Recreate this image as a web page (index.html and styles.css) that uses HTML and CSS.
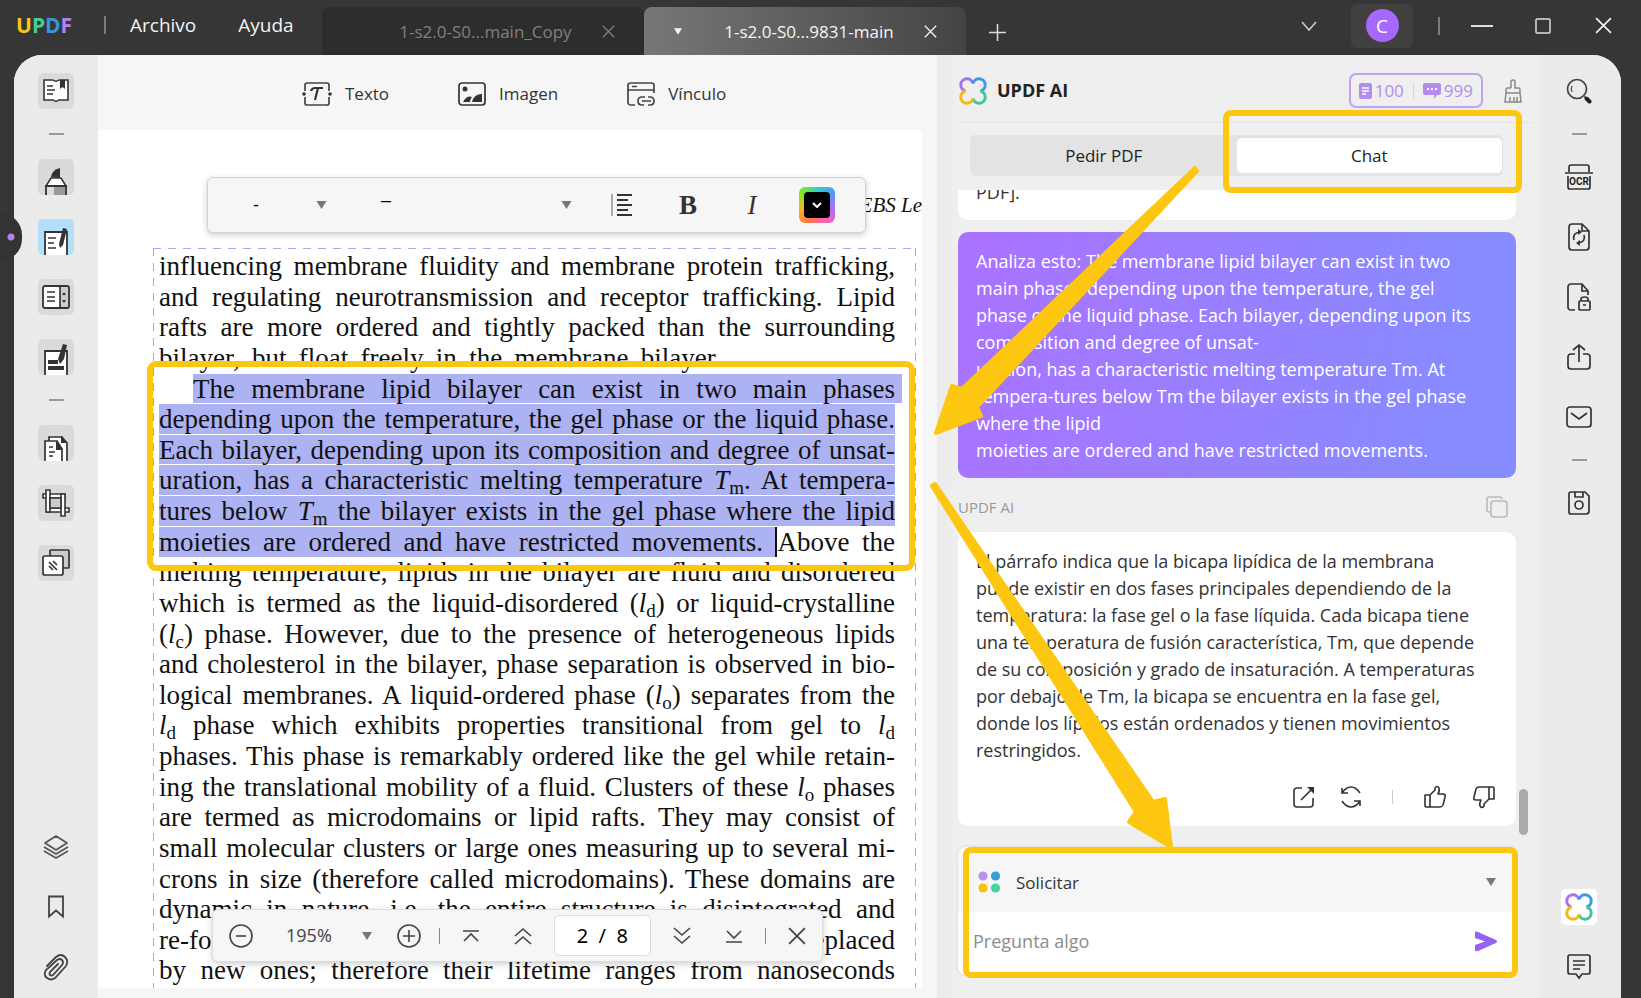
FILE: index.html
```html
<!DOCTYPE html>
<html lang="es">
<head>
<meta charset="utf-8">
<title>UPDF</title>
<link rel="stylesheet" href="styles.css">
</head>
<body>
<svg class="defs" aria-hidden="true">
  <symbol id="clover" viewBox="0 0 28 28">
    <g fill="none" stroke-width="3">
      <path stroke="#a573ec" d="M6.500 14A6.200 6.200 0 1 1 14 6.500"/>
      <path stroke="#3b9be8" d="M14 6.500A6.200 6.200 0 1 1 21.500 14"/>
      <path stroke="#3fc795" d="M21.500 14A6.200 6.200 0 1 1 14 21.500"/>
      <path stroke="#f4b813" d="M14 21.500A6.200 6.200 0 1 1 6.500 14"/>
    </g>
  </symbol>
  <symbol id="caret" viewBox="0 0 10 8"><path fill="currentColor" d="M0 0h10L5 8z"/></symbol>
  <symbol id="cross" viewBox="0 0 16 16"><path fill="none" stroke="currentColor" stroke-width="1.6" d="M1 1l14 14M15 1L1 15"/></symbol>
</svg>

<header class="titlebar">
  <div class="logo"><span class="l1">U</span><span class="l2">P</span><span class="l3">D</span><span class="l4">F</span></div>
  <i class="vline"></i>
  <nav class="menu"><button>Archivo</button><button>Ayuda</button></nav>
  <div class="tabs">
    <div class="tab"><span>1-s2.0-S0...main_Copy</span><button aria-label="Cerrar"><svg width="13" height="13"><use href="#cross"/></svg></button></div>
    <div class="tab active"><svg class="tab-caret" width="8" height="7"><use href="#caret"/></svg><span>1-s2.0-S0...9831-main</span><button aria-label="Cerrar"><svg width="13" height="13"><use href="#cross"/></svg></button></div>
    <button class="add" aria-label="Nueva pestaña"><svg width="17" height="17" viewBox="0 0 17 17"><path fill="none" stroke="#ddd" stroke-width="1.5" d="M8.5 0v17M0 8.5h17"/></svg></button>
  </div>
  <div class="window-tools">
    <button aria-label="Lista"><svg width="16" height="10" viewBox="0 0 16 10"><path fill="none" stroke="#ccc" stroke-width="1.6" d="M1 1l7 8 7-8"/></svg></button>
    <button class="account"><span>C</span></button>
    <i class="vline"></i>
    <button class="min" aria-label="Minimizar"><svg width="22" height="2"><path fill="#ddd" d="M0 0h22v2H0z"/></svg></button>
    <button class="max" aria-label="Maximizar"><svg width="16" height="16"><rect x="1" y="1" width="14" height="14" rx="1" fill="none" stroke="#ddd" stroke-width="1.5"/></svg></button>
    <button class="close" aria-label="Cerrar ventana"><svg width="17" height="17"><use href="#cross"/></svg></button>
  </div>
</header>

<main class="app">
  <aside class="rail left">
    <button class="tile" aria-label="Lector"><svg width="28" height="26" viewBox="0 0 28 26"><path fill="#fff" stroke="#333" stroke-width="1.6" d="M2 2h9q3 2.500 6 0h9v20h-9q-3 2.500-6 0H2z"/><path fill="#333" d="M18 2h5v9l-2.500-2L18 11z"/><path stroke="#333" stroke-width="1.6" d="M5 8h6M5 12h8M5 16h6"/></svg></button>
    <i class="dash"></i>
    <button class="tile low" aria-label="Comentar"><svg width="24" height="28" viewBox="0 0 24 28"><path fill="#333" d="M7 10q1-7 9-9v10z"/><path fill="#fff" stroke="#333" stroke-width="1.600" d="M7 11h10l5 8H2z"/><path fill="#999" d="M10 20h11v8H10z"/><path fill="#ddd" d="M3 20h7v8H3z"/><path fill="none" stroke="#333" stroke-width="1.8" d="M2 28v-9h20v9"/></svg></button>
    <button class="tile low on" aria-label="Editar"><svg width="26" height="28" viewBox="0 0 26 28"><path fill="#fff" stroke="#333" stroke-width="1.8" d="M2 29V5h22v24"/><path stroke="#333" stroke-width="1.6" d="M5 11h8M5 16h6M5 21h8"/><path fill="#333" d="M20 1l4 1-4 16-3 3-1-4z"/></svg></button>
    <button class="tile" aria-label="Páginas"><svg width="28" height="26" viewBox="0 0 28 26"><rect x="1" y="2" width="26" height="22" rx="2" fill="#fff" stroke="#333" stroke-width="1.8"/><path fill="#ccc" d="M18 3h8v20h-8z"/><path stroke="#333" stroke-width="1.7" d="M18 2v22M5 8h8M5 13h8M5 17h8"/><path fill="#333" d="M20 11l2-3 2 3zM20 16l2 3 2-3z"/></svg></button>
    <button class="tile low" aria-label="Censurar"><svg width="26" height="32" viewBox="0 0 26 32"><path fill="#fff" stroke="#333" stroke-width="1.8" d="M2 33V8h22v25"/><path fill="#333" d="M5 17h10v4H5zM5 23h16v4H5zM20 1l4 1-3 14-4 5-2-5z"/></svg></button>
    <i class="dash"></i>
    <button class="tile low" aria-label="Organizar"><svg width="26" height="26" viewBox="0 0 26 26"><path fill="#fff" stroke="#333" stroke-width="1.7" d="M6 28V2h13l5 6v20"/><path fill="#fff" stroke="#333" stroke-width="1.7" d="M2 28V6h12l5 8v14"/><path fill="#333" d="M13 6l7 9h-7zM18 1l6 7h-6z"/><path stroke="#333" stroke-width="1.600" d="M6 12h4M6 17h6M6 21h4"/></svg></button>
    <button class="tile" aria-label="Recortar"><svg width="28" height="28" viewBox="0 0 28 28"><g fill="#fff" stroke="#333" stroke-width="1.600"><path d="M1 5h22v4H1zM5 19h22v4H5z"/><path d="M4 1h4v22H4zM19 5h4v22h-4z"/><path fill="#ccc" d="M8 9h11v10H8z"/></g></svg></button>
    <button class="tile" aria-label="Lote"><svg width="28" height="28" viewBox="0 0 28 28"><g stroke="#333" stroke-width="1.700"><rect x="8" y="1" width="19" height="18" rx="1" fill="#ccc"/><rect x="1" y="7" width="20" height="19" rx="2" fill="#fff"/><path d="M7 13l8 8M11 12l4 4M7 17l4 4"/></g></svg></button>
    <button class="tile plain end" aria-label="Capas"><svg width="26" height="26" viewBox="0 0 26 26"><g fill="none" stroke="#555" stroke-width="1.700" stroke-linejoin="round"><path d="M13 2l11 7-11 7L2 9zM1 13l12 7 12-7M1 17l12 7 12-7"/></g></svg></button>
    <button class="tile plain" aria-label="Marcadores"><svg width="18" height="24" viewBox="0 0 18 24"><path fill="none" stroke="#444" stroke-width="1.8" d="M2 1.500h14v20l-7-6-7 6z"/></svg></button>
    <button class="tile plain" aria-label="Adjuntos"><svg width="26" height="28" viewBox="0 0 26 28"><path fill="none" stroke="#444" stroke-width="1.800" stroke-linecap="round" d="M4 13L13 4q5-4 9 0t1 9L12 25q-4 3-8 0t-1-8L14 7q3-2 5 0t0 5l-9 10q-2 1-3 0t0-3l8-8"/></svg></button>
  </aside>

  <section class="doc">
    <div class="doc-tools">
      <button><svg width="30" height="26" viewBox="0 0 30 26"><g fill="none" stroke="#444" stroke-width="1.700"><path d="M3 10V4q0-2 2-2h20q2 0 2 2v6M27 16v6q0 2-2 2H5q-2 0-2-2v-6"/></g><circle cx="2" cy="13" r="1.800" fill="#333"/><circle cx="28" cy="13" r="1.800" fill="#333"/><path fill="none" stroke="#333" stroke-width="2.200" d="M9 10q1-3 4-3h8M16 7l-3 12"/></svg>Texto</button>
      <button><svg width="28" height="26" viewBox="0 0 28 26"><rect x="1" y="2" width="26" height="22" rx="3" fill="none" stroke="#333" stroke-width="1.700"/><circle cx="7" cy="8" r="2.500" fill="#333"/><path fill="#333" d="M5 21q4-7 9-5-2 2-2 5zM14 21q2-8 10-8v8z"/></svg>Imagen</button>
      <button><svg width="28" height="26" viewBox="0 0 28 26"><g fill="none" stroke="#444" stroke-width="1.700"><path d="M8 24H4q-3 0-3-3V4q0-2 3-2h20q3 0 3 2v8M1 9h26M5 5.500h5M17 24h-2q-4 0-4-4t4-4h3M21 16h2q4 0 4 4t-4 4h-2M15 20h9"/></g></svg>Vínculo</button>
    </div>
    <article class="page">
      <p class="running">FEBS Le</p>
      <div class="format-bar">
        <span class="blank size">-</span>
        <svg class="c1" width="11" height="8"><use href="#caret"/></svg>
        <span class="blank family">–</span>
        <svg class="c2" width="11" height="8"><use href="#caret"/></svg>
        <button aria-label="Alinear"><svg width="24" height="24" viewBox="0 0 24 24"><path stroke="#aaa" stroke-width="2" d="M2 1v22"/><path stroke="#333" stroke-width="1.800" d="M7 2h15M7 7h11M7 12h15M7 17h11M7 22h15"/></svg></button>
        <button class="bold">B</button>
        <button class="ital">I</button>
        <button class="colour" aria-label="Color"><span><svg width="10" height="6" viewBox="0 0 10 6"><path fill="none" stroke="#fff" stroke-width="2" d="M1 1l4 4 4-4"/></svg></span></button>
      </div>
      <div class="block">
        <p>influencing membrane fluidity and membrane protein trafficking,</p>
        <p>and regulating neurotransmission and receptor trafficking. Lipid</p>
        <p>rafts are more ordered and tightly packed than the surrounding</p>
        <p class="short">bilayer, but float freely in the membrane bilayer.</p>
        <p class="sel first">The membrane lipid bilayer can exist in two main phases</p>
        <p class="sel">depending upon the temperature, the gel phase or the liquid phase.</p>
        <p class="sel">Each bilayer, depending upon its composition and degree of unsat-</p>
        <p class="sel">uration, has a characteristic melting temperature <em>T</em><sub>m</sub>. At tempera-</p>
        <p class="sel">tures below <em>T</em><sub>m</sub> the bilayer exists in the gel phase where the lipid</p>
        <p><mark>moieties are ordered and have restricted movements. </mark>Above the</p>
        <p>melting temperature, lipids in the bilayer are fluid and disordered</p>
        <p>which is termed as the liquid-disordered (<em>l</em><sub>d</sub>) or liquid-crystalline</p>
        <p>(<em>l</em><sub>c</sub>) phase. However, due to the presence of heterogeneous lipids</p>
        <p>and cholesterol in the bilayer, phase separation is observed in bio-</p>
        <p>logical membranes. A liquid-ordered phase (<em>l</em><sub>o</sub>) separates from the</p>
        <p><em>l</em><sub>d</sub> phase which exhibits properties transitional from gel to <em>l</em><sub>d</sub></p>
        <p>phases. This phase is remarkably ordered like the gel while retain-</p>
        <p>ing the translational mobility of a fluid. Clusters of these <em>l</em><sub>o</sub> phases</p>
        <p>are termed as microdomains or lipid rafts. They may consist of</p>
        <p>small molecular clusters or large ones measuring up to several mi-</p>
        <p>crons in size (therefore called microdomains). These domains are</p>
        <p>dynamic in nature, i.e. the entire structure is disintegrated and</p>
        <p>re-formed with time and the old ones are continuously replaced</p>
        <p>by new ones; therefore their lifetime ranges from nanoseconds</p>
      </div>
    </article>
    <div class="zoom-bar">
      <button aria-label="Reducir"><svg width="24" height="24" viewBox="0 0 24 24"><g fill="none" stroke="#444" stroke-width="1.600"><circle cx="12" cy="12" r="11"/><path d="M7 12h10"/></g></svg></button>
      <span class="pct">195%</span>
      <svg class="zc" width="10" height="8"><use href="#caret"/></svg>
      <button class="plus" aria-label="Ampliar"><svg width="24" height="24" viewBox="0 0 24 24"><g fill="none" stroke="#444" stroke-width="1.600"><circle cx="12" cy="12" r="11"/><path d="M6 12h12M12 6v12"/></g></svg></button>
      <i class="vline"></i>
      <button aria-label="Primera"><svg width="18" height="16" viewBox="0 0 18 16"><path fill="none" stroke="#444" stroke-width="1.600" d="M1 3h16M2 13l7-7 7 7"/></svg></button>
      <button class="w" aria-label="Anterior"><svg width="18" height="18" viewBox="0 0 18 18"><path fill="none" stroke="#444" stroke-width="1.600" d="M1 9l8-7 8 7M1 17l8-7 8 7"/></svg></button>
      <input aria-label="Página" value="2&nbsp; /&nbsp; 8">
      <button aria-label="Siguiente"><svg width="18" height="18" viewBox="0 0 18 18"><path fill="none" stroke="#444" stroke-width="1.600" d="M1 1l8 7 8-7M1 9l8 7 8-7"/></svg></button>
      <button class="w" aria-label="Última"><svg width="18" height="16" viewBox="0 0 18 16"><path fill="none" stroke="#444" stroke-width="1.600" d="M2 3l7 7 7-7M1 14h16"/></svg></button>
      <i class="vline"></i>
      <button aria-label="Cerrar barra"><svg width="18" height="18"><use href="#cross"/></svg></button>
    </div>
  </section>

  <section class="ai">
    <header class="ai-head">
      <svg width="28" height="28"><use href="#clover"/></svg>
      <h2>UPDF AI</h2>
      <div class="quota">
        <svg width="13" height="16" viewBox="0 0 13 16"><rect width="13" height="16" rx="2" fill="#b48cf0"/><path stroke="#fff" stroke-width="1.400" d="M3 5h7M3 8h7M3 11h4"/></svg><span>100</span>
        <i></i>
        <svg width="18" height="16" viewBox="0 0 18 16"><path fill="#b48cf0" d="M2 0h14q2 0 2 2v8q0 2-2 2h-2l-3 4v-4H2q-2 0-2-2V2q0-2 2-2z"/><path stroke="#fff" stroke-width="2" stroke-dasharray="2 2" d="M4 6h10"/></svg><span>999</span>
      </div>
      <button aria-label="Limpiar"><svg width="18" height="24" viewBox="0 0 18 24"><path fill="none" stroke="#888" stroke-width="1.500" d="M7 9V3q0-2 2-2t2 2v6h4q1 0 1 2v3H2v-3q0-2 1-2h4M2 14L1 23h16l-1-9M6 23v-5M10 23v-5M13 23v-5"/></svg></button>
    </header>
    <div class="modes"><button>Pedir PDF</button><button class="on">Chat</button></div>
    <div class="thread">
      <div class="msg cut"><span>PDF].</span></div>
      <div class="msg mine">Analiza esto: The membrane lipid bilayer can exist in two<br>main phases depending upon the temperature, the gel<br>phase or the liquid phase. Each bilayer, depending upon its<br>composition and degree of unsat-<br>uration, has a characteristic melting temperature Tm. At<br>tempera-tures below Tm the bilayer exists in the gel phase<br>where the lipid<br>moieties are ordered and have restricted movements.</div>
      <div class="who"><span>UPDF AI</span><button aria-label="Copiar"><svg width="22" height="22" viewBox="0 0 22 22"><g fill="none" stroke="#bbb" stroke-width="1.600"><path d="M4 16H3q-2 0-2-2V3q0-2 2-2h11q2 0 2 2"/><rect x="5" y="5" width="16" height="16" rx="3"/></g></svg></button></div>
      <div class="msg answer">El párrafo indica que la bicapa lipídica de la membrana<br>puede existir en dos fases principales dependiendo de la<br>temperatura: la fase gel o la fase líquida. Cada bicapa tiene<br>una temperatura de fusión característica, Tm, que depende<br>de su composición y grado de insaturación. A temperaturas<br>por debajo de Tm, la bicapa se encuentra en la fase gel,<br>donde los lípidos están ordenados y tienen movimientos<br>restringidos.
        <div class="acts">
          <button aria-label="Abrir"><svg width="22" height="22" viewBox="0 0 22 22"><path fill="none" stroke="#333" stroke-width="1.600" d="M9 2H4Q1 2 1 5v13q0 3 3 3h13q3 0 3-3v-6M8 14L19 3"/><path fill="#333" d="M14 1h7v7z"/></svg></button>
          <button aria-label="Repetir"><svg width="22" height="22" viewBox="0 0 22 22"><path fill="none" stroke="#333" stroke-width="1.600" d="M2 2v5h6M2 7q4-6 9-6t9 6M20 20v-5h-6M20 15q-4 6-9 6t-9-6"/></svg></button>
          <i></i>
          <button aria-label="Me gusta"><svg width="24" height="24" viewBox="0 0 24 24"><path id="thumb" fill="none" stroke="#333" stroke-width="1.600" stroke-linejoin="round" d="M2 10h5v12H3q-1 0-1-1zM7 10l5-5V3q2-3 4 0 1 2-1 6h5q3 0 2 3l-2 8q-1 2-3 2H7"/></svg></button>
          <button aria-label="No me gusta"><svg class="flip" width="24" height="24" viewBox="0 0 24 24"><use href="#thumb"/></svg></button>
        </div>
      </div>
      <i class="scroll"></i>
    </div>
    <form class="ask">
      <button type="button" class="pick"><svg width="23" height="22" viewBox="0 0 23 22"><circle cx="5" cy="5" r="4.600" fill="#ba92ec"/><circle cx="17.500" cy="5" r="4.600" fill="#379fd9"/><circle cx="5" cy="17" r="4.600" fill="#f6c20a"/><circle cx="17.500" cy="17" r="4.600" fill="#43d59a"/></svg><span>Solicitar</span><svg width="10" height="8"><use href="#caret"/></svg></button>
      <div class="entry"><input aria-label="Pregunta" placeholder="Pregunta algo"><button type="button" aria-label="Enviar"><svg width="24" height="21" viewBox="0 0 24 21"><path fill="#9861f5" d="M1 1q1-1 3 0l18 8q2 1.500 0 3L4 20q-3 1-3-1v-5l10-3.500L1 7z"/></svg></button></div>
    </form>
  </section>

  <aside class="rail right">
    <button class="tile plain" aria-label="Buscar"><svg width="26" height="26" viewBox="0 0 26 26"><circle cx="11" cy="11" r="9.500" fill="none" stroke="#444" stroke-width="1.700"/><path fill="none" stroke="#555" stroke-width="1.400" d="M6 8q-1.500 3 0 6M18 18l3 3"/><path stroke="#222" stroke-width="4" stroke-linecap="round" d="M20.500 20.500l3 3"/></svg></button>
    <i class="dash"></i>
    <button class="tile plain" aria-label="OCR"><svg width="28" height="28" viewBox="0 0 28 28"><path fill="none" stroke="#333" stroke-width="1.700" d="M4 9V4q0-2 2-2h16q2 0 2 2v5M0 10h28M3 13v11q0 2 2 2h18q2 0 2-2V13"/><text x="14" y="22" text-anchor="middle" class="ocr">OCR</text></svg></button>
    <button class="tile plain" aria-label="Convertir"><svg width="24" height="28" viewBox="0 0 24 28"><path fill="none" stroke="#333" stroke-width="1.700" d="M15 1H5Q2 1 2 4v20q0 3 3 3h14q3 0 3-3V8zM15 1v7h7M7 17q-2-7 6-8M17 12q2 7-6 8"/><path fill="#333" d="M11 6l4 3-4 3zM13 17l-4 3 4 3z"/></svg></button>
    <button class="tile plain" aria-label="Proteger"><svg width="24" height="28" viewBox="0 0 24 28"><path fill="none" stroke="#333" stroke-width="1.700" d="M8 27H4q-3 0-3-3V4q0-3 3-3h11l6 7v4M15 1v7h6"/><rect x="12" y="18" width="11" height="9" rx="1" fill="none" stroke="#333" stroke-width="1.700"/><path fill="none" stroke="#333" stroke-width="1.600" d="M14 18v-2q0-2 3.500-2t3.500 2v2M16 22h3"/></svg></button>
    <button class="tile plain" aria-label="Compartir"><svg width="24" height="28" viewBox="0 0 24 28"><path fill="none" stroke="#333" stroke-width="1.700" d="M8 11H4q-3 0-3 3v9q0 3 3 3h16q3 0 3-3v-9q0-3-3-3h-4M12 19V2M6 7l6-5 6 5"/></svg></button>
    <button class="tile plain" aria-label="Correo"><svg width="26" height="24" viewBox="0 0 26 24"><rect x="1" y="2" width="24" height="20" rx="3" fill="none" stroke="#333" stroke-width="1.700"/><path fill="none" stroke="#333" stroke-width="1.700" d="M5 8l8 6 8-6"/></svg></button>
    <i class="dash"></i>
    <button class="tile plain" aria-label="Guardar"><svg width="24" height="24" viewBox="0 0 24 24"><path fill="none" stroke="#333" stroke-width="1.700" d="M4 1h14l4 4v15q0 3-3 3H4q-2 0-2-2V3q0-2 2-2zM8 1v5h8V1"/><circle cx="12" cy="14" r="4" fill="none" stroke="#333" stroke-width="1.700"/></svg></button>
    <button class="tile white end" aria-label="UPDF AI"><svg width="28" height="28"><use href="#clover"/></svg></button>
    <button class="tile plain" aria-label="Comentarios"><svg width="24" height="26" viewBox="0 0 24 26"><path fill="none" stroke="#333" stroke-width="1.700" d="M3 1h18q2 0 2 2v15q0 2-2 2h-6l-3 4-3-4H3q-2 0-2-2V3q0-2 2-2zM6 7h12M6 11h12M6 15h7"/></svg></button>
  </aside>
</main>

<i class="handle"></i>
<svg class="callouts" viewBox="0 0 1641 998" aria-hidden="true">
  <g fill="none" stroke="#fdc610" stroke-width="6">
    <rect x="150" y="364" width="762" height="204" rx="6"/>
    <rect x="1226" y="113" width="293" height="77" rx="5"/>
    <rect x="966" y="850" width="549" height="125" rx="5"/>
  </g>
  <g fill="#fdc610" stroke="#fdc610" stroke-width="4" stroke-linejoin="round">
    <path d="M1195 168L962 389 952 386 936 433 981 416 977 407 1197 171z"/>
    <path d="M932 486L1136 812 1129 822 1171 847 1165 799 1153 802 935 484z"/>
  </g>
</svg>
</body>
</html>
```
FILE: styles.css
```css
* { box-sizing: border-box; }
html, body { height: 100%; margin: 0; }
body {
  display: flex; flex-direction: column; position: relative; overflow: hidden;
  background: #363636; color: #333;
  font: 17px/27px "Open Sans", "Noto Sans", sans-serif;
}
button, input { font: inherit; color: inherit; border: 0; padding: 0; margin: 0; background: none; }
p, h2 { margin: 0; }
svg { display: block; flex: none; }
.defs { position: absolute; width: 0; height: 0; }

/* Title bar */
.titlebar { display: flex; flex: none; height: 55px; align-items: stretch; color: #f2f2f2; }
.vline { flex: none; width: 2px; height: 18px; background: #7c7c7c; align-self: center; }
.titlebar .vline { margin-bottom: 5px; }
.logo { width: 87px; padding-left: 16px; line-height: 50px; font-weight: 700; font-size: 21px; }
.l1 { color: #f6c61c; } .l2 { color: #43cf94; } .l3 { color: #3a94d6; } .l4 { color: #b183ee; }
.menu { display: flex; gap: 42px; padding: 0 28px 4px 24px; font-size: 19px; }
.logo + .vline { margin-left: 17px; }
.tabs { display: flex; align-items: flex-end; }
.tab { display: flex; align-items: center; justify-content: flex-end; gap: 30px; width: 322px; height: 48px; padding-right: 29px; border-radius: 8px 8px 0 0; background: #2d2d2d; color: #808080; }
.tab.active { background: linear-gradient(90deg, #777, #444); color: #f5f5f5; }
.tab-caret { margin-right: 12px; }
.add { height: 46px; margin-left: 23px; }
.window-tools { display: flex; align-items: center; margin-left: auto; padding: 0 29px 4px 0; }
.window-tools .vline { margin: 0 31px 0 25px; }
.window-tools .account { width: 62px; height: 44px; margin-left: 34px; border-radius: 6px; background: #404040; display: flex; align-items: center; justify-content: center; }
.account span { width: 33px; height: 33px; border-radius: 50%; background: #a768ff; color: #fff; font-size: 19px; line-height: 34px; }
.max { margin-left: 42px; }
.close { margin-left: 44px; }

/* Frame */
.app { display: flex; flex: 1; min-height: 0; margin: 0 20px 0 14px; border-radius: 28px 28px 0 0; overflow: hidden; background: #efefef; }
.rail { display: flex; flex: none; flex-direction: column; align-items: center; gap: 24px; padding: 18px 0 13px; background: #ebebeb; }
.left { width: 84px; }
.right { width: 81px; padding-right: 3px; }
.tile { display: flex; flex: none; align-items: center; justify-content: center; width: 36px; height: 36px; border-radius: 5px; background: #dadada; overflow: hidden; }
.tile.low { align-items: flex-end; }
.tile.on { background: #b4dffa; }
.tile.plain { background: none; }
.tile.white { background: #fff; }
.end { margin-top: auto; }
.dash { flex: none; width: 15px; height: 2px; margin: 0; background: #999; }
.ocr { font: 700 10px Roboto, sans-serif; fill: #222; }
.handle { position: absolute; left: 0; top: 213px; width: 22px; height: 48px; border-radius: 0 24px 24px 0; background: #333 radial-gradient(circle at 11px 24px, #b183ee 3px, transparent 4px); }

/* Document */
.doc { position: relative; display: flex; flex: 1; flex-direction: column; min-width: 0; padding: 0 15px 10px 0; background: #f6f6f6; }
.doc-tools { display: flex; flex: none; height: 75px; align-items: center; gap: 69px; padding: 2px 0 0 204px; }
.doc-tools button { display: flex; align-items: center; gap: 13px; }
.page { position: relative; display: flex; flex: 1; flex-direction: column; min-height: 0; padding: 59px 6px 0 55px; border-radius: 4px; background: #fff; overflow: hidden; color: #111; font-family: "Liberation Serif", serif; }
.running { margin: 0 -6px 0 0; flex: none; height: 59px; font-size: 21px; line-height: 32px; font-style: italic; text-align: right; }
.block {
  display: grid; flex: 1; min-height: 0; grid-template-rows: repeat(24, minmax(0, 1fr)); padding: 3px 21px 2px 6px; font-size: 27px; line-height: 30px;
  background:
    repeating-linear-gradient(90deg, #bba0e2 0 8px, transparent 8px 15px) top / 100% 1px no-repeat,
    repeating-linear-gradient(180deg, #b3a0e6 0 8px, transparent 8px 15px) left / 1px 100% no-repeat,
    repeating-linear-gradient(180deg, #b3a0e6 0 8px, transparent 8px 15px) right / 1px 100% no-repeat;
}
.block p { white-space: nowrap; text-align-last: justify; }
.block .short { width: 562px; }
.block .sel { background: #adb2f3; background-clip: padding-box; border-bottom: 1px solid #fff; }
.block .first { margin: 0 -7px 0 34px; padding-right: 7px; }
.block sub { font-size: 19px; line-height: 0; vertical-align: -5px; }
mark { background: #adb2f3; color: inherit; border-right: 2px solid #111; }

.format-bar { position: absolute; left: 109px; top: 47px; display: flex; align-items: center; width: 659px; height: 56px; padding: 0 30px 0 45px; border: 1px solid #d2d2d2; border-radius: 6px; background: #f6f6f6; box-shadow: 0 2px 6px #0003; color: #333; }
.blank { font: 18px "Liberation Sans", sans-serif; color: #000; }
.format-bar svg[width="11"], .zc { color: #777; }
.c1 { margin-left: 57px; }
.family { margin: -10px 0 0 54px; }
.c2 { margin: 0 38px 0 auto; }
.bold, .ital { width: 64px; font: 700 27px "Liberation Serif", serif; }
.bold { margin-left: 33px; width: 42px; }
.ital { font-weight: 400; font-style: italic; margin-left: 11px; margin-right: 15px; }
.colour { width: 36px; height: 36px; padding: 5px; border-radius: 6px; background: conic-gradient(#32d0d0, #4c9df5, #b46cf0, #ff5fb4, #ff7a4a, #ffb020, #7fea20, #32d0d0); }
.colour span { display: flex; align-items: center; justify-content: center; height: 26px; border-radius: 4px; background: #000; }

.zoom-bar { position: absolute; left: 114px; bottom: 36px; display: flex; align-items: center; gap: 22px; width: 611px; height: 53px; padding: 0 0 0 16px; border-radius: 6px; border: 1px solid #ddd; background: #f6f6f6; box-shadow: 0 2px 6px #0003; color: #444; font-size: 18px; }
.zoom-bar .vline { width: 1px; height: 16px; background: #888; }
.zoom-bar .plus { margin-left: 3px; }
.zoom-bar .plus + .vline { margin-left: -4px; }
.pct { margin-left: 11px; }
.zc { margin-left: 8px; }
.zoom-bar .w { margin-left: 12px; }
.zoom-bar input { width: 97px; height: 41px; border: 1px solid #ddd; border-radius: 5px; background: #fff; color: #000; font: 20px "Noto Sans", sans-serif; text-align: center; }

/* Assistant */
.ai { display: flex; flex: none; flex-direction: column; width: 603px; padding: 0 24px 23px 21px; background: linear-gradient(90deg, #eaeaea, #efefef 20px); }
.ai-head { display: flex; flex: none; align-items: center; height: 68px; margin-right: -17px; padding: 4px 0 0 1px; border-bottom: 1px solid #e4e4e4; }
.ai-head h2 { margin: 0 auto 0 10px; font-size: 18px; line-height: 27px; color: #222; }
.quota { display: flex; align-items: center; gap: 3px; height: 35px; padding: 0 8px; border: 2px solid #c3a2f2; border-radius: 7px; color: #b48cf0; }
.quota i { width: 1px; height: 16px; margin: 0 6px; background: #d5d5d5; }
.ai-head button { margin: 0 11px 0 21px; }
.modes { display: flex; flex: none; height: 41px; margin: 12px 13px 0 12px; padding: 3px 1px; border-radius: 5px; background: #e3e3e3; color: #222; }
.modes button { flex: 1; border-radius: 5px; }
.modes .on { background: #fff; }
.thread { position: relative; display: flex; flex: 1; flex-direction: column; min-height: 0; margin-top: 14px; }
.msg { flex: none; padding: 16px 18px 14px; border-radius: 10px; background: #fff; font-size: 18px; white-space: nowrap; }
.msg.cut { display: flex; align-items: flex-end; height: 30px; padding: 0 18px 14px; margin-bottom: 12px; border-radius: 0 0 10px 10px; overflow: hidden; }
.mine { background: linear-gradient(100deg, #ab72ff, #868cff 92%); color: #fff; }
.who { display: flex; justify-content: space-between; align-items: center; height: 54px; padding: 4px 8px 0 0; font-size: 15px; color: #999; }
.acts { display: flex; align-items: center; justify-content: flex-end; gap: 25px; height: 48px; padding: 18px 2px 0 0; }
.acts i { width: 1px; height: 14px; margin: 0 5px; background: #ccc; }
.flip { transform: rotate(180deg); }
.scroll { position: absolute; right: -12px; bottom: 12px; width: 9px; height: 46px; border-radius: 5px; background: #aaa; }
.ask { flex: none; height: 128px; padding: 5px 0; border-radius: 8px; background: #fff; box-shadow: 0 0 3px #0002; }
.pick { display: flex; width: 100%; height: 60px; align-items: center; gap: 15px; padding: 0 20px; background: #f6f6f6; color: #333; }
.pick span { flex: 1; text-align: left; }
.pick svg:last-child { color: #777; }
.entry { display: flex; align-items: center; height: 58px; padding: 0 18px 0 15px; }
.entry input { flex: 1; min-width: 0; font-size: 18px; outline: 0; }
.entry input::placeholder { color: #8c8c8c; }
.callouts { position: absolute; left: 0; top: 0; width: 1641px; height: 998px; pointer-events: none; }
```
